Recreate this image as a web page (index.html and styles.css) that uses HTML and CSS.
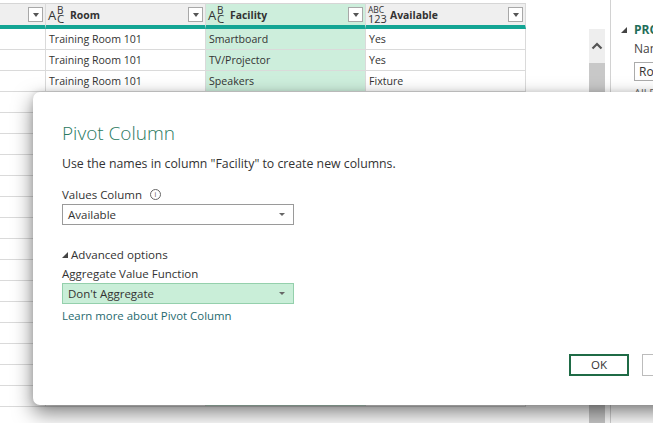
FILE: index.html
```html
<!DOCTYPE html>
<html>
<head>
<meta charset="utf-8">
<link rel="stylesheet" href="styles.css">
</head>
<body>
<div class="app">
  <div class="grid-area">
    <div class="grid">
      <div class="row head">
        <div class="cell c0"><span class="dd"><i></i></span></div>
        <div class="cell c1"><span class="ticon"><b class="a">A</b><b class="bsup">B</b><b class="csub">C</b></span><span class="hname">Room</span><span class="dd"><i></i></span></div>
        <div class="cell c2 sel"><span class="ticon"><b class="a">A</b><b class="bsup">B</b><b class="csub">C</b></span><span class="hname">Facility</span><span class="dd"><i></i></span></div>
        <div class="cell c3"><span class="nicon"><b>ABC</b><b>123</b></span><span class="hname">Available</span><span class="dd"><i></i></span></div>
      </div>
      <div class="row"><div class="cell c0"></div><div class="cell c1">Training Room 101</div><div class="cell c2 sel">Smartboard</div><div class="cell c3">Yes</div></div>
      <div class="row"><div class="cell c0"></div><div class="cell c1">Training Room 101</div><div class="cell c2 sel">TV/Projector</div><div class="cell c3">Yes</div></div>
      <div class="row"><div class="cell c0"></div><div class="cell c1">Training Room 101</div><div class="cell c2 sel">Speakers</div><div class="cell c3">Fixture</div></div>
      <div class="row"><div class="cell c0"></div><div class="cell c1">Training Room 101</div><div class="cell c2 sel">Whiteboard</div><div class="cell c3">Yes</div></div>
      <div class="row"><div class="cell c0"></div><div class="cell c1">Training Room 101</div><div class="cell c2 sel">Laptop</div><div class="cell c3">Yes</div></div>
      <div class="row"><div class="cell c0"></div><div class="cell c1">Training Room 101</div><div class="cell c2 sel">Conference Phone</div><div class="cell c3">Yes</div></div>
      <div class="row"><div class="cell c0"></div><div class="cell c1">Training Room 102</div><div class="cell c2 sel">Smartboard</div><div class="cell c3">Yes</div></div>
      <div class="row"><div class="cell c0"></div><div class="cell c1">Training Room 102</div><div class="cell c2 sel">TV/Projector</div><div class="cell c3">Yes</div></div>
      <div class="row"><div class="cell c0"></div><div class="cell c1">Training Room 102</div><div class="cell c2 sel">Speakers</div><div class="cell c3">Yes</div></div>
      <div class="row"><div class="cell c0"></div><div class="cell c1">Training Room 102</div><div class="cell c2 sel">Whiteboard</div><div class="cell c3">Yes</div></div>
      <div class="row"><div class="cell c0"></div><div class="cell c1">Training Room 102</div><div class="cell c2 sel">Laptop</div><div class="cell c3">Yes</div></div>
      <div class="row"><div class="cell c0"></div><div class="cell c1">Training Room 102</div><div class="cell c2 sel">Conference Phone</div><div class="cell c3">Yes</div></div>
      <div class="row"><div class="cell c0"></div><div class="cell c1">Training Room 103</div><div class="cell c2 sel">Smartboard</div><div class="cell c3">Yes</div></div>
      <div class="row"><div class="cell c0"></div><div class="cell c1">Training Room 103</div><div class="cell c2 sel">TV/Projector</div><div class="cell c3">Yes</div></div>
      <div class="row"><div class="cell c0"></div><div class="cell c1">Training Room 103</div><div class="cell c2 sel">Speakers</div><div class="cell c3">Fixture</div></div>
      <div class="row"><div class="cell c0"></div><div class="cell c1">Training Room 103</div><div class="cell c2 sel">Laptop</div><div class="cell c3">Yes</div></div>
      <div class="row"><div class="cell c0"></div><div class="cell c1">Training Room 103</div><div class="cell c2 sel">Conference Phone</div><div class="cell c3">Yes</div></div>
      <div class="row"><div class="cell c0"></div><div class="cell c1">Training Room 103</div><div class="cell c2 sel">Whiteboard</div><div class="cell c3">Yes</div></div>
    </div>
    <div class="vscroll">
      <div class="vs-arrow"><svg width="12" height="8" viewBox="0 0 12 8"><path d="M1.5 6.5 L6 2 L10.5 6.5" fill="none" stroke="#555" stroke-width="2.2"/></svg></div>
      <div class="vs-thumb"></div>
    </div>
  </div>
  <div class="side">
    <div class="side-title"><svg class="tri" width="6" height="6" viewBox="0 0 6 6"><path d="M6 0 L6 6 L0 6 Z" fill="#444"/></svg><span>PROPERTIES</span></div>
    <div class="side-label">Name</div>
    <div class="side-input">Room Facilities</div>
    <div class="side-label2">All Properties</div>
  </div>
</div>

<div class="dialog">
  <div class="dlg-title">Pivot Column</div>
  <div class="dlg-desc">Use the names in column "Facility" to create new columns.</div>
  <div class="field-label">Values Column <span class="info">i</span></div>
  <div class="select"><span>Available</span><i class="caret"></i></div>
  <div class="adv"><svg class="tri" width="6" height="6" viewBox="0 0 6 6"><path d="M6 0 L6 6 L0 6 Z" fill="#444"/></svg><span>Advanced options</span></div>
  <div class="field-label tight">Aggregate Value Function</div>
  <div class="select green"><span>Don't Aggregate</span><i class="caret"></i></div>
  <div class="learn">Learn more about Pivot Column</div>
  <div class="buttons">
    <div class="btn ok">OK</div>
    <div class="btn">Cancel</div>
  </div>
</div>
</body>
</html>
```
FILE: styles.css
```css
html, body {
  margin: 0;
  padding: 0;
  width: 653px;
  height: 423px;
  overflow: hidden;
  background: #fff;
  font-family: "Open Sans", "Noto Sans", sans-serif;
  color: #333;
}
.app {
  display: flex;
  height: 423px;
  padding-top: 3px;
  box-sizing: border-box;
}
.grid-area {
  width: 610px;
  display: flex;
  flex-shrink: 0;
}
.grid {
  width: 526px;
  display: flex;
  flex-direction: column;
}
.row {
  display: flex;
  height: 21px;
  flex-shrink: 0;
}
.cell {
  box-sizing: border-box;
  height: 21px;
  border-bottom: 1px solid #dadada;
  border-right: 1px solid #dadada;
  font-size: 10.6px;
  line-height: 20px;
  padding-left: 3px;
  white-space: nowrap;
  overflow: hidden;
  display: flex;
  align-items: center;
  color: #333;
}
.c0 { width: 46px; }
.c1 { width: 160px; }
.c2 { width: 160px; }
.c3 { width: 160px; }
.sel { background: #cdeedc; }
.row.head { height: 26px; }
.row.head .cell {
  height: 26px;
  border-top: 1px solid #d6d6d6;
  border-bottom: 4px solid #13a594;
  background: #efefef;
  font-weight: 700;
  padding-left: 2px;
  padding-right: 2px;
}
.row.head .cell.sel { background: #cdeedc; }
.row.head .c0 { justify-content: flex-end; }
.hname { flex: 1; font-size: 10.4px; color: #333; }
.dd {
  width: 15px;
  height: 15px;
  box-sizing: border-box;
  border: 1px solid #a8a8a8;
  background: #fff;
  display: flex;
  align-items: center;
  justify-content: center;
  flex-shrink: 0;
}
.dd i {
  width: 0; height: 0;
  border-left: 3.5px solid transparent;
  border-right: 3.5px solid transparent;
  border-top: 4px solid #555;
}
.ticon {
  position: relative;
  width: 20px;
  height: 20px;
  margin-right: 2px;
  font-weight: 400;
  color: #333;
  flex-shrink: 0;
}
.ticon b { position: absolute; font-weight: 400; }
.ticon .a { left: 0; top: 4px; font-size: 13px; line-height: 13px; }
.ticon .bsup { left: 9px; top: 0; font-size: 10px; line-height: 10px; }
.ticon .csub { left: 9px; top: 8px; font-size: 11.5px; line-height: 11.5px; }
.nicon {
  display: flex;
  flex-direction: column;
  width: 20px;
  margin-right: 2px;
  margin-left: 0;
  flex-shrink: 0;
}
.nicon b { font-weight: 400; line-height: 9px; }
.nicon b:first-child { font-size: 8.5px; }
.nicon b:last-child { font-size: 11px; line-height: 10px; }

.vscroll {
  margin-left: 63px;
  margin-top: 26px;
  width: 16px;
  background: #eeeeee;
  display: flex;
  flex-direction: column;
}
.vs-arrow {
  height: 34px;
  display: flex;
  align-items: center;
  justify-content: center;
}
.vs-thumb {
  flex: 1;
  background: #c8c8c8;
}

.side {
  flex: 1;
  border-left: 1px solid #d2d2d2;
  margin-top: -3px;
  padding-left: 10px;
  white-space: nowrap;
  overflow: hidden;
}
.tri { flex-shrink: 0; }
.side-title {
  margin-top: 21px;
  display: flex;
  align-items: center;
  gap: 7px;
  font-size: 12px;
  line-height: 17px;
  font-weight: 700;
  color: #1f6e5a;
}
.side-label {
  margin-top: 2px;
  margin-left: 13px;
  font-size: 12px;
  color: #444;
  line-height: 18px;
}
.side-input {
  margin-top: 4px;
  margin-left: 13px;
  border: 1px solid #ababab;
  height: 17px;
  line-height: 17px;
  padding-left: 4px;
  font-size: 12px;
  width: 200px;
}
.side-label2 {
  margin-left: 13px;
  margin-top: 4px;
  font-size: 11px;
  color: #666;
}

.dialog {
  position: absolute;
  left: 33px;
  top: 92px;
  width: 720px;
  height: 313px;
  box-sizing: border-box;
  background: #fff;
  border-radius: 7px;
  box-shadow: 0 8px 20px rgba(0,0,0,0.5), 0 0 6px rgba(0,0,0,0.12);
  padding: 27px 0 0 29px;
}
.dlg-title {
  font-size: 19px;
  font-weight: 300;
  color: #2a7a5f;
  line-height: 28px;
}
.dlg-desc {
  margin-top: 8px;
  font-size: 12.3px;
  line-height: 17px;
  color: #333;
}
.field-label {
  margin-top: 14px;
  font-size: 11.5px;
  line-height: 17px;
  color: #333;
  display: flex;
  align-items: center;
}
.field-label.tight { margin-top: 2px; }
.info {
  margin-left: 8px;
  width: 9px;
  height: 9px;
  border: 1px solid #666;
  border-radius: 50%;
  font-size: 7px;
  line-height: 9px;
  text-align: center;
  color: #555;
}
.select {
  margin-top: 1px;
  width: 232px;
  height: 21px;
  box-sizing: border-box;
  border: 1px solid #9a9a9a;
  display: flex;
  align-items: center;
  justify-content: space-between;
  padding: 0 8px 0 5px;
  font-size: 11.5px;
  color: #333;
}
.select.green {
  background: #c9eed8;
  border-color: #94d0ac;
}
.caret {
  width: 0; height: 0;
  border-left: 3px solid transparent;
  border-right: 3px solid transparent;
  border-top: 3px solid #666;
}
.adv {
  margin-top: 21px;
  display: flex;
  align-items: center;
  gap: 3px;
  font-size: 11.6px;
  line-height: 17px;
}
.learn {
  margin-top: 3px;
  font-size: 11.4px;
  line-height: 17px;
  color: #1f6a6f;
}
.buttons {
  margin-top: 30px;
  margin-left: 507px;
  display: flex;
  gap: 13px;
}
.btn {
  width: 60px;
  height: 22px;
  box-sizing: border-box;
  border: 1px solid #bcbcbc;
  font-size: 11.5px;
  line-height: 20px;
  text-align: center;
  color: #333;
}
.btn.ok {
  border: 2px solid #1f6b46;
  line-height: 18px;
}
```
